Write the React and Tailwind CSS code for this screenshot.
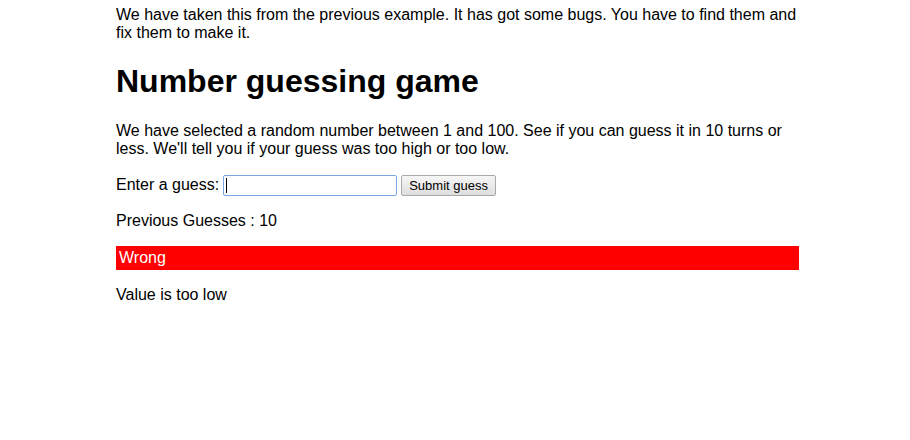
import React from 'react';

const App = () => {
  return (
    <div className="min-h-[440px] bg-white text-black font-['Liberation_Sans',Arial,sans-serif] text-base leading-[18px]">
      <div className="ml-[116px] w-[683px] pt-[6px]">
        <p>
          We have taken this from the previous example. It has got some bugs. You have to find them and fix them to make it.
        </p>

        <h1 className="mt-[21px] text-[32px] leading-[37px] font-bold">Number guessing game</h1>

        <p className="mt-[22px]">
          We have selected a random number between 1 and 100. See if you can guess it in 10 turns or less. We'll tell you if your guess was too high or too low.
        </p>

        {/* Guess form */}
        <div className="mt-[16px] flex items-center h-[22px]">
          <label htmlFor="guessField">Enter a guess:</label>
          <div className="ml-[4px] h-[21px] w-[174px] rounded-[2px] border border-[#7aa7e0] bg-white flex items-center pl-[2px]">
            <span className="block h-[15px] w-px bg-black" />
          </div>
          <button className="ml-[4px] h-[21px] px-[7px] rounded-[2px] border border-[#a9a9a9] bg-gradient-to-b from-[#f6f6f6] to-[#dedede] text-[13px] leading-[15px] text-black">
            Submit guess
          </button>
        </div>

        <p className="mt-[16px]">Previous Guesses : 10</p>

        <p className="mt-[16px] bg-[#ff0000] text-white py-[3px] px-[3px]">Wrong</p>

        <p className="mt-[16px]">Value is too low</p>
      </div>
    </div>
  );
};

export default App;
